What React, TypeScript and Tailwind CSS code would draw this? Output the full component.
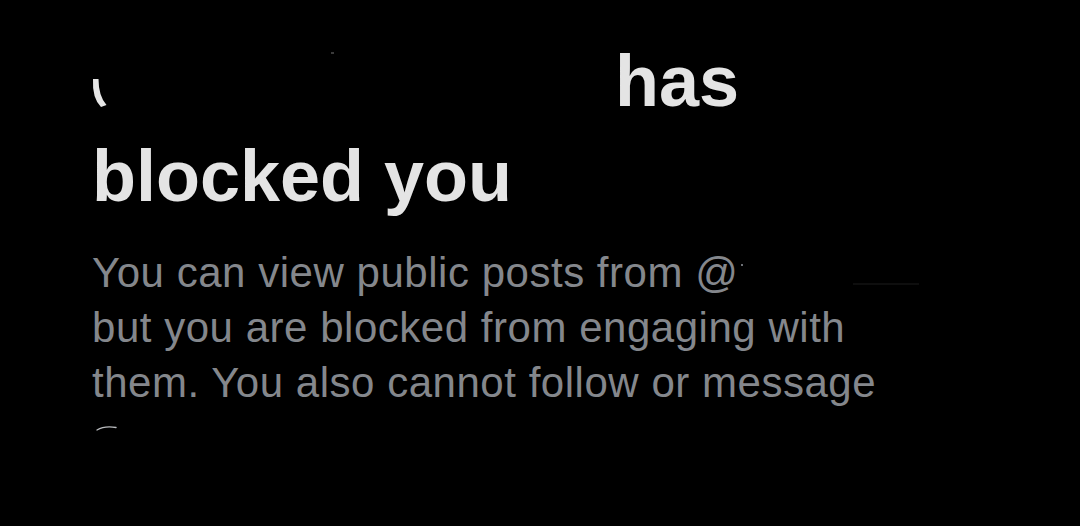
import React from "react";

function Remnant({ className, children }: { className: string; children: React.ReactNode }) {
  return <span className={`pointer-events-none absolute ${className}`}>{children}</span>;
}

export default function App() {
  return (
    <div className="w-[1080px] h-[526px] overflow-hidden bg-black">
      <div className="flex flex-col gap-[21px] pl-[92px] pt-[34px] font-['Liberation_Sans',Arial,sans-serif]">
        <h1 className="text-[72px] leading-[95px] font-bold text-[#e4e4e4]">
          <span className="relative inline-block w-[503px] h-[10px]">
            <Remnant className="left-[-2px] top-[-20px]">
              <svg width="20" height="34" viewBox="0 0 20 34">
                <path d="M3 3 Q2 22 11 31 L16.5 29 Q8.5 20 8.5 3 Z" fill="#e6e6e6" />
              </svg>
            </Remnant>
            <Remnant className="left-[239px] top-[-44px] w-[3px] h-[2px] bg-[#3a3a3a]">{null}</Remnant>
          </span>{" "}
          has
          <br />
          blocked you
        </h1>
        <p className="text-[42px] leading-[55px] tracking-[0.53px] text-[#84878c]">
          <span>You can view public posts from @</span>
          <span className="relative inline-block w-[200px] h-[10px]">
            <Remnant className="left-[3px] top-[-13px] w-[2px] h-[2px] bg-[#6d7075]">{null}</Remnant>
            <Remnant className="left-[115px] top-[6px] w-[66px] h-[2px] bg-[#0e0e0e]">{null}</Remnant>
          </span>
          <br />
          but you are blocked from engaging with
          <br />
          them. You also cannot follow or message
          <br />
          <span className="relative inline-block w-[10px] h-[10px]">
            <Remnant className="left-[2px] top-[-19px]">
              <svg width="26" height="10" viewBox="0 0 26 10">
                <path d="M3 7 C8 4 16 3.5 22 4.5" stroke="#b9bbbe" strokeWidth="1.4" fill="none" strokeLinecap="round" />
              </svg>
            </Remnant>
          </span>
        </p>
      </div>
    </div>
  );
}
